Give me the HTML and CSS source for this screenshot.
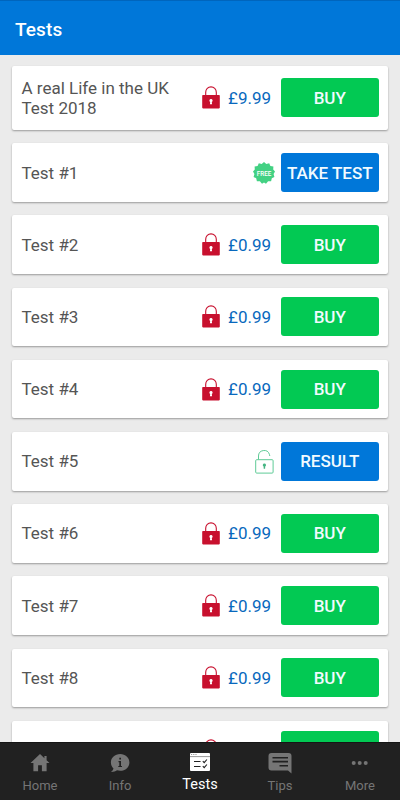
FILE: index.html
```html
<!DOCTYPE html>
<html lang="en">
<head>
    <meta charset="UTF-8">
    <meta name="viewport" content="width=device-width, initial-scale=1.0">
    <title>Tests</title>
    <link rel="stylesheet" href="styles.css">
</head>
<body>
    <!-- Shared icons -->
    <svg class="defs" width="0" height="0">
        <symbol id="lock" viewBox="0 0 18 23">
            <path d="M3.7 10V6.2a5.3 5.3 0 0 1 10.6 0V10" fill="none" stroke="#c8102e" stroke-width="1.1"/>
            <rect x="0.2" y="9" width="17.6" height="13.4" rx="0.8" fill="#c8102e"/>
            <path d="M9 13a1.6 1.6 0 0 0-.8 3l-.3 2.3h2.2L9.8 16A1.6 1.6 0 0 0 9 13z" fill="#fff"/>
        </symbol>
        <symbol id="unlock" viewBox="0 0 19 25">
            <path d="M3.5 10.5V7a5.600 5.600 0 0 1 10.900-1.700l.4 1.700" fill="none" stroke="#5fcb97" stroke-width="1"/>
            <rect x="0.7" y="10.7" width="17.4" height="13.4" rx="1" fill="none" stroke="#5fcb97" stroke-width="1"/>
            <path d="M9.4 14.500a1.600 1.600 0 0 0-.8 3l.1 2.300h1.400l.1-2.300a1.600 1.600 0 0 0-.8-3z" fill="#45b583"/>
        </symbol>
    </svg>

    <header class="header">
        <h1>Tests</h1>
    </header>

    <main class="list">
        <div class="card card-tall">
            <span class="name">A real Life in the UK Test 2018</span>
            <svg class="lock"><use href="#lock"/></svg>
            <span class="price">£9.99</span>
            <button class="btn buy">BUY</button>
        </div>
        <div class="card">
            <span class="name">Test #1</span>
            <svg class="free" viewBox="0 0 22 22">
                <path d="M11 0l2.300 2 2.900-.8 1.200 2.700 3 .6-.2 3L22 9.500 20.600 12l.8 2.900-2.600 1.400-.7 3-3-.1L13 21.700l-2-1.200-2 1.200-2.100-2.500-3 .1-.7-3L.6 14.900l.8-2.900L0 9.500l1.800-2-.2-3 3-.6 1.200-2.700 2.900.8z" fill="#43d183"/>
                <text x="11" y="13.500" text-anchor="middle" textLength="14.500" lengthAdjust="spacingAndGlyphs">FREE</text>
            </svg>
            <button class="btn blue">TAKE TEST</button>
        </div>
        <div class="card">
            <span class="name">Test #2</span>
            <svg class="lock"><use href="#lock"/></svg>
            <span class="price">£0.99</span>
            <button class="btn buy">BUY</button>
        </div>
        <div class="card">
            <span class="name">Test #3</span>
            <svg class="lock"><use href="#lock"/></svg>
            <span class="price">£0.99</span>
            <button class="btn buy">BUY</button>
        </div>
        <div class="card">
            <span class="name">Test #4</span>
            <svg class="lock"><use href="#lock"/></svg>
            <span class="price">£0.99</span>
            <button class="btn buy">BUY</button>
        </div>
        <div class="card">
            <span class="name">Test #5</span>
            <svg class="unlock"><use href="#unlock"/></svg>
            <button class="btn blue">RESULT</button>
        </div>
        <div class="card">
            <span class="name">Test #6</span>
            <svg class="lock"><use href="#lock"/></svg>
            <span class="price">£0.99</span>
            <button class="btn buy">BUY</button>
        </div>
        <div class="card">
            <span class="name">Test #7</span>
            <svg class="lock"><use href="#lock"/></svg>
            <span class="price">£0.99</span>
            <button class="btn buy">BUY</button>
        </div>
        <div class="card">
            <span class="name">Test #8</span>
            <svg class="lock"><use href="#lock"/></svg>
            <span class="price">£0.99</span>
            <button class="btn buy">BUY</button>
        </div>
        <div class="card">
            <span class="name"></span>
            <svg class="lock"><use href="#lock"/></svg>
            <span class="price"></span>
            <button class="btn buy"></button>
        </div>
    </main>

    <!-- Bottom tabs -->
    <nav class="tabs">
        <a class="tab">
            <svg viewBox="0 0 24 24"><path d="M12 3L2.500 12h2.900v8.200h4.700v-6h3.800v6h4.700V12h2.900l-2.900-2.700V5h-2.200v2.200z"/></svg>
            <span>Home</span>
        </a>
        <a class="tab">
            <svg viewBox="0 0 24 24">
                <path d="M12.200 3C7 3 2.900 6.600 2.900 11.400c0 2.400 1 4.500 2.600 6-.4 1.500-1.300 2.600-2.500 3.500 2.300.1 4.400-.5 6-1.600 1 .3 2.100.4 3.200.4 5.200 0 9.200-3.500 9.200-8.300S17.400 3 12.200 3z"/>
                <path class="cut" d="M11.300 6.800h1.700v1.700h-1.700zM10.500 10h2.500v4.900h1v1.200h-3.700v-1.200h1v-3.700h-.8z"/>
            </svg>
            <span>Info</span>
        </a>
        <a class="tab active">
            <svg viewBox="0 0 22 22">
                <rect x="1" y="2" width="20" height="18" rx="1"/>
                <path class="bar" d="M2 3.500h1.200M4.200 3.500h1.200M6.400 3.500h1.200M1 5.600h20"/>
                <path class="line" d="M5 10.500h6.500M5 15.500h6.500M13.800 10.200l1.400 1.500 2.700-3.200M13.800 15.200l1.400 1.500 2.700-3.200" stroke-width="1.100"/>
            </svg>
            <span>Tests</span>
        </a>
        <a class="tab">
            <svg viewBox="0 0 24 24">
                <path d="M3.500 2h17a3 3 0 0 1 3 3v17.500L20 19.500H3.500a3 3 0 0 1-3-3V5a3 3 0 0 1 3-3z"/>
                <path class="line" d="M4.500 6.800h15.500M4.500 10.600h15.500M11.500 14.700h8.500" stroke-width="1.600"/>
            </svg>
            <span>Tips</span>
        </a>
        <a class="tab">
            <svg viewBox="0 0 24 24"><circle cx="5.700" cy="12" r="2"/><circle cx="11.700" cy="12" r="2"/><circle cx="17.700" cy="12" r="2"/></svg>
            <span>More</span>
        </a>
    </nav>
</body>
</html>
```
FILE: styles.css
```css
* {
    box-sizing: border-box;
}
body {
    font-family: Roboto, Arial, sans-serif;
    margin: 0;
    height: 800px;
    display: flex;
    flex-direction: column;
    overflow: hidden;
    background-color: #ebebeb;
}
.defs {
    display: none;
}
.header {
    flex: none;
    height: 55px;
    padding: 2px 15px 0;
    display: flex;
    align-items: center;
    background-color: #0077d9;
    border-top: 1px solid #0065bd;
}
h1 {
    margin: 0;
    font-size: 19px;
    font-weight: 500;
    letter-spacing: 0.1px;
    color: #fff;
}
.list {
    flex: 1;
    min-height: 0;
    overflow: hidden;
    padding: 11px 12px 0 11.5px;
    display: flex;
    flex-direction: column;
    gap: 13.7px;
}
.card {
    flex: none;
    height: 58.5px;
    padding: 0 9.5px 0 10px;
    display: flex;
    align-items: center;
    background-color: #fff;
    border-radius: 2px;
    box-shadow: 0 1px 2px rgba(0, 0, 0, 0.35);
}
.card-tall {
    height: 63.6px;
}
.name {
    flex: 1;
    padding-right: 20px;
    font-size: 17px;
    line-height: 20px;
    color: #555;
}
.lock {
    width: 18px;
    height: 23px;
    margin-right: 8px;
}
.unlock {
    width: 19px;
    height: 25px;
    margin-right: 7px;
}
.free {
    width: 22px;
    height: 22px;
    margin-right: 6px;
}
.free text {
    font-size: 7px;
    font-weight: 500;
    fill: #fff;
}
.price {
    width: 53px;
    font-size: 17px;
    color: #0868bd;
}
.btn {
    width: 97.5px;
    height: 39px;
    padding: 0;
    border: 0;
    border-radius: 3px;
    font-family: inherit;
    font-size: 17px;
    font-weight: 500;
    color: #f2fbff;
    white-space: nowrap;
}
.buy {
    background-color: #02c953;
}
.blue {
    background-color: #0077d9;
}
.tabs {
    flex: none;
    height: 58px;
    display: flex;
    background-color: #212121;
    border-top: 1px solid #151515;
}
.tab {
    flex: 1;
    padding-top: 8px;
    display: flex;
    flex-direction: column;
    align-items: center;
    font-size: 13px;
    line-height: 16px;
    color: #757575;
}
.tab svg {
    width: 24px;
    height: 24px;
    margin-bottom: 3px;
    fill: #757575;
}
.tab .cut {
    fill: #212121;
}
.tab .line {
    fill: none;
    stroke: #212121;
}
.tab .bar {
    fill: none;
    stroke: #999;
}
.tab.active {
    font-size: 14.5px;
    color: #fff;
}
.tab.active svg {
    width: 22px;
    height: 22px;
    margin-bottom: 4px;
    fill: #fff;
}
```
